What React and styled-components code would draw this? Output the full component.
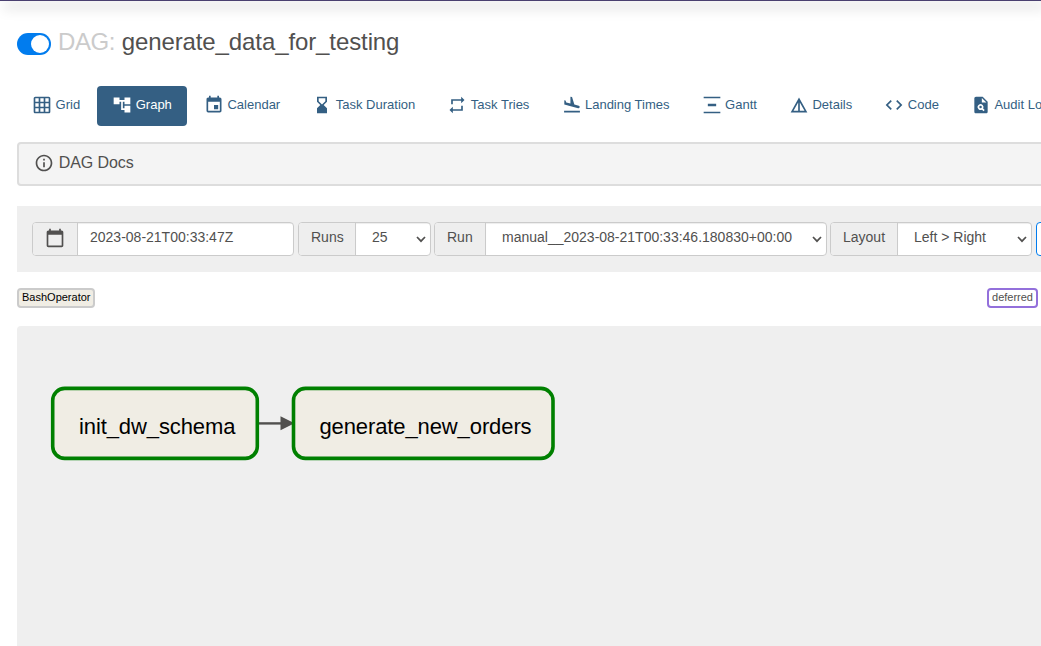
import React from "react";
import styled, { createGlobalStyle } from "styled-components";
import {
  MdGridOn, MdAccountTree, MdEvent, MdHourglassBottom, MdRepeat, MdFlightLand,
  MdVerticalDistribute, MdDetails, MdCode, MdPlagiarism, MdOutlineInfo, MdCalendarToday,
} from "react-icons/md";

const GlobalStyle = createGlobalStyle`
  * { box-sizing: border-box; }
  html, body { margin: 0; overflow: hidden; background: #fff; }
  body { font-family: "Liberation Sans", Arial, sans-serif; font-size: 14px; line-height: 20px; color: #51504f; }
`;

const Page = styled.div`
  width: 1041px;
  height: 646px;
  overflow: hidden;
  white-space: nowrap;
`;

const NavEdge = styled.div`
  height: 1px;
  background: #4a4070;
  box-shadow: 4px 5px 13px 1px rgba(0, 0, 0, 0.28);
`;

const Main = styled.main`
  width: 1300px;
  padding-left: 17px;
`;

const Header = styled.header`
  display: flex;
  height: 85px;
  padding-top: 25px;
`;

const Toggle = styled.span`
  display: flex;
  justify-content: flex-end;
  width: 34px;
  height: 22px;
  margin: 7px 7px 0 0;
  padding: 2px;
  border-radius: 11px;
  background: #017cee;
`;

const Knob = styled.span`
  width: 18px;
  height: 18px;
  border-radius: 50%;
  background: #fff;
`;

const Title = styled.h3`
  margin: 0;
  font-size: 24px;
  line-height: 32px;
  font-weight: 400;
  letter-spacing: -0.1px;
`;

const Muted = styled.span`
  color: #cbcbcb;
  letter-spacing: -0.4px;
`;

const Tabs = styled.nav`
  display: flex;
  gap: 2px;
`;

const Tab = styled.a`
  display: flex;
  flex: none;
  gap: 3.4px;
  height: 40px;
  padding: 9px 15px 0 15.2px;
  border-radius: 4px;
  font-size: 13px;
  color: ${(p) => (p.$active ? "#fff" : "#345f83")};
  background: ${(p) => (p.$active ? "#345f83" : "transparent")};
  svg { width: 20px; height: 20px; }
`;

const Docs = styled.section`
  display: flex;
  align-items: center;
  gap: 4.4px;
  height: 44px;
  margin-top: 16px;
  padding: 0 15px 3px 15.4px;
  border: 2px solid #ddd;
  border-radius: 4px;
  background: #f4f4f4;
  font-size: 16px;
  letter-spacing: -0.08px;
  svg { width: 20px; height: 20px; margin-top: 1px; }
`;

const Toolbar = styled.section`
  display: flex;
  height: 66px;
  margin-top: 20px;
  padding: 16px 15px;
  background: #efefef;
`;

const Group = styled.div`
  display: flex;
  flex: none;
  width: ${(p) => p.$width}px;
  height: 34px;
  margin-right: ${(p) => p.$after}px;
  border: 1px solid #cbcbcb;
  border-radius: 4px;
  background: #fff;
  overflow: hidden;
`;

const Addon = styled.span`
  flex: none;
  width: ${(p) => p.$width}px;
  padding: 4px 0 0 12px;
  border-right: 1px solid #cbcbcb;
  background: #eee;
  svg { display: block; width: 20px; height: 20px; margin-top: 1px; }
`;

const Field = styled.span`
  display: flex;
  flex: 1;
  justify-content: space-between;
  padding: 4px 3px 0 ${(p) => p.$inset}px;
  box-shadow: inset 0 1px 1px rgba(0, 0, 0, 0.075);
  svg { width: 12px; height: 12px; margin-top: 6px; }
`;

const UpdateButton = styled.button`
  flex: none;
  width: 70px;
  height: 34px;
  border: 1px solid #017cee;
  border-radius: 4px;
  background: #fff;
`;

const Legend = styled.div`
  display: flex;
  justify-content: space-between;
  width: 1021px;
  margin-top: 16px;
`;

const Badge = styled.span`
  height: 20px;
  padding: 0 3px;
  border: 2px solid ${(p) => p.$border};
  border-radius: 4px;
  background: ${(p) => p.$fill};
  color: ${(p) => p.$color};
  font-size: 11px;
  line-height: 15px;
`;

const Graph = styled.section`
  height: 320px;
  margin-top: 18px;
  border-radius: 4px 4px 0 0;
  background: #efefef;
`;

const Canvas = styled.svg`
  display: block;
  font-size: 22px;
  letter-spacing: -0.1px;
`;

const Chevron = () => (
  <svg viewBox="0 0 12 12" fill="none" stroke="#51504f" strokeWidth="1.7">
    <path d="M2 4l4 4.2L10 4" />
  </svg>
);

const tabs = [
  ["Grid", MdGridOn],
  ["Graph", MdAccountTree],
  ["Calendar", MdEvent],
  ["Task Duration", MdHourglassBottom],
  ["Task Tries", MdRepeat],
  ["Landing Times", MdFlightLand],
  ["Gantt", MdVerticalDistribute],
  ["Details", MdDetails],
  ["Code", MdCode],
  ["Audit Log", MdPlagiarism],
];

const selects = [
  { label: "Runs", value: "25", width: 133, addon: 57, after: 3 },
  { label: "Run", value: "manual__2023-08-21T00:33:46.180830+00:00", width: 393, addon: 51, after: 3 },
  { label: "Layout", value: "Left > Right", width: 202, addon: 67, after: 4 },
];

const nodes = [
  { label: "init_dw_schema", x: 35.7, width: 204.6 },
  { label: "generate_new_orders", x: 276.5, width: 259.5 },
];

export default function App() {
  return (
    <Page>
      <GlobalStyle />
      <NavEdge />
      <Main>
        <Header>
          <Toggle><Knob /></Toggle>
          <Title><Muted>DAG:</Muted> generate_data_for_testing</Title>
        </Header>
        <Tabs>
          {tabs.map(([label, Icon]) => (
            <Tab key={label} $active={label === "Graph"}><Icon />{label}</Tab>
          ))}
        </Tabs>
        <Docs><MdOutlineInfo />DAG Docs</Docs>
        <Toolbar>
          <Group $width={262} $after={4}>
            <Addon $width={45}><MdCalendarToday /></Addon>
            <Field $inset={12}>2023-08-21T00:33:47Z</Field>
          </Group>
          {selects.map((s) => (
            <Group key={s.label} $width={s.width} $after={s.after}>
              <Addon $width={s.addon}>{s.label}</Addon>
              <Field $inset={16}>{s.value}<Chevron /></Field>
            </Group>
          ))}
          <UpdateButton />
        </Toolbar>
        <Legend>
          <Badge $border="#cbcbcb" $fill="#f0ede4" $color="#000">BashOperator</Badge>
          <Badge $border="mediumpurple" $fill="#fff" $color="#51504f">deferred</Badge>
        </Legend>
        <Graph>
          <Canvas width="1024" height="320">
            <path d="M242 97.4h24" stroke="#51504f" strokeWidth="2.4" />
            <path d="M263.5 90.3v14l14-7z" fill="#51504f" />
            {nodes.map((n) => (
              <g key={n.label}>
                <rect x={n.x} y="62.4" width={n.width} height="70" rx="12" fill="#f0ede4" stroke="green" strokeWidth="3.6" />
                <text x={n.x + n.width / 2 + 2.2} y="107.7" textAnchor="middle">{n.label}</text>
              </g>
            ))}
          </Canvas>
        </Graph>
      </Main>
    </Page>
  );
}
